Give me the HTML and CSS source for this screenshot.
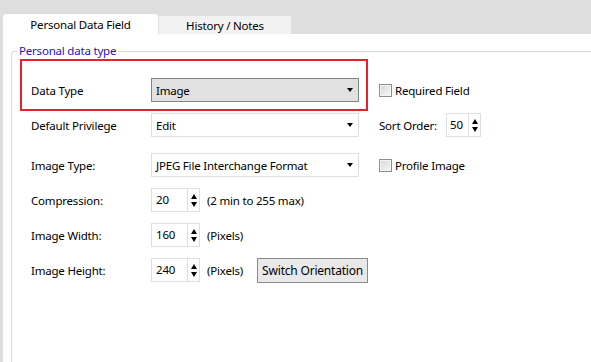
FILE: index.html
```html
<!DOCTYPE html>
<html lang="en">

<head>
    <meta charset="UTF-8">
    <title>Personal Data Field</title>
    <link rel="stylesheet" href="styles.css">
</head>

<body>
    <div class="window">
        <div class="tabs">
            <div class="tab active">Personal Data Field</div>
            <div class="tab">History / Notes</div>
        </div>

        <div class="panel">
            <fieldset class="group">
                <legend>Personal data type</legend>
                <div class="fields">

                    <!-- data type (highlighted) -->
                    <div class="line line-first">
                        <div class="highlight">
                            <span class="label">Data Type</span>
                            <div class="combo combo-dark"><span>Image</span><i class="caret"></i></div>
                        </div>
                        <div class="side">
                            <span class="check"></span><span class="check-text">Required Field</span>
                        </div>
                    </div>

                    <div class="line line-2">
                        <div class="cell">
                            <span class="label">Default Privilege</span>
                            <div class="combo"><span>Edit</span><i class="caret"></i></div>
                        </div>
                        <div class="side">
                            <span class="sort-label">Sort Order:</span>
                            <div class="spin spin-small">
                                <span class="spin-value">50</span>
                                <span class="spin-arrows"><i class="up"></i><i class="down"></i></span>
                            </div>
                        </div>
                    </div>

                    <div class="line line-3">
                        <div class="cell">
                            <span class="label">Image Type:</span>
                            <div class="combo"><span>JPEG File Interchange Format</span><i class="caret"></i></div>
                        </div>
                        <div class="side">
                            <span class="check"></span><span class="check-text">Profile Image</span>
                        </div>
                    </div>

                    <div class="line">
                        <div class="cell">
                            <span class="label">Compression:</span>
                            <div class="spin">
                                <span class="spin-value">20</span>
                                <span class="spin-arrows"><i class="up"></i><i class="down"></i></span>
                            </div>
                            <span class="note">(2 min to 255 max)</span>
                        </div>
                    </div>

                    <div class="line">
                        <div class="cell">
                            <span class="label">Image Width:</span>
                            <div class="spin">
                                <span class="spin-value">160</span>
                                <span class="spin-arrows"><i class="up"></i><i class="down"></i></span>
                            </div>
                            <span class="note">(Pixels)</span>
                        </div>
                    </div>

                    <div class="line">
                        <div class="cell">
                            <span class="label">Image Height:</span>
                            <div class="spin">
                                <span class="spin-value">240</span>
                                <span class="spin-arrows"><i class="up"></i><i class="down"></i></span>
                            </div>
                            <span class="note note-px">(Pixels)</span>
                            <button class="btn">Switch Orientation</button>
                        </div>
                    </div>

                </div>
            </fieldset>
        </div>
    </div>
</body>

</html>
```

FILE: styles.css
```css
body {
    margin: 0;
    font-family: "Noto Sans", "Segoe UI", sans-serif;
    font-size: 11.5px;
    letter-spacing: -0.2px;
    color: #000;
    background: #dedede;
    overflow: hidden;
    white-space: nowrap;
}

.window {
    padding-left: 3px;
    height: 362px;
}

/* tab strip */
.tabs {
    display: flex;
    align-items: flex-end;
    height: 34px;
}

.tab {
    width: 132px;
    height: 18px;
    line-height: 19px;
    margin-left: 1px;
    text-align: center;
    background: #f2f2f2;
}

.tab.active {
    width: 155px;
    height: 20px;
    line-height: 22px;
    margin-left: 0;
    background: #fff;
    border-radius: 3px 3px 0 0;
}

.panel {
    background: #fff;
    height: 328px;
    padding-top: 9px;
    box-sizing: border-box;
}

.group {
    margin: 0 -10px 0 8px;
    padding: 0;
    border: 1px solid #d6dae0;
    border-radius: 3px;
    height: 330px;
}

.group legend {
    margin-left: 5px;
    padding: 0 2px;
    line-height: 16px;
    color: #2a10b8;
}

.fields {
    padding-left: 8px;
}

/* rows */
.line {
    display: flex;
    align-items: center;
    margin-top: 11px;
}

.line-first {
    align-items: flex-end;
    margin-top: 0;
}

.line-first .side {
    margin-bottom: 9px;
}

.line-2 {
    margin-top: 2px;
}

.line-3 {
    margin-top: 16px;
}

.highlight {
    display: flex;
    align-items: center;
    width: 328px;
    height: 24px;
    padding: 17px 7px 7px 9px;
    border: 2px solid #e8202a;
}

.cell {
    display: flex;
    align-items: center;
    width: 348px;
    height: 24px;
    padding-left: 11px;
    box-sizing: border-box;
}

.side {
    display: flex;
    align-items: center;
    height: 24px;
    margin-left: 11px;
}

.label {
    width: 120px;
    flex: none;
}

/* combo boxes */
.combo {
    display: flex;
    align-items: center;
    justify-content: space-between;
    width: 208px;
    height: 24px;
    padding: 0 4px;
    box-sizing: border-box;
    border: 1px solid #dcdfe4;
    background: #fff;
    flex: none;
}

.combo-dark {
    background: #e1e1e1;
    border-color: #858585;
}

.caret {
    width: 0;
    height: 0;
    margin-right: 1px;
    border-left: 3.5px solid transparent;
    border-right: 3.5px solid transparent;
    border-top: 4px solid #000;
}

/* check boxes */
.check {
    width: 11px;
    height: 11px;
    border: 1px solid #8e8e8e;
    background: linear-gradient(135deg, #d8d8d8, #f6f6f6);
    box-shadow: inset 0 0 0 1px #f4f4f4;
}

.check-text {
    margin-left: 3px;
}

.sort-label {
    width: 67px;
}

/* spin boxes */
.spin {
    display: flex;
    height: 24px;
    flex: none;
}

.spin-value {
    width: 37px;
    padding-left: 4px;
    line-height: 22px;
    box-sizing: border-box;
    border: 1px solid #dcdfe4;
}

.spin-small .spin-value {
    width: 23px;
    padding-left: 3px;
}

.spin-arrows {
    display: flex;
    flex-direction: column;
    align-items: center;
    justify-content: center;
    gap: 3px;
    width: 12px;
    box-sizing: border-box;
    border: 1px solid #dcdfe4;
    border-left: none;
}

.spin-arrows .up {
    border-left: 3px solid transparent;
    border-right: 3px solid transparent;
    border-bottom: 5px solid #000;
}

.spin-arrows .down {
    border-left: 3px solid transparent;
    border-right: 3px solid transparent;
    border-top: 5px solid #000;
}

.note {
    margin-left: 7px;
}

.note-px {
    width: 45px;
}

.btn {
    margin-left: 9px;
    width: 121px;
    height: 25px;
    padding: 0;
    font-family: inherit;
    font-size: 12px;
    letter-spacing: -0.2px;
    color: #000;
    background: #e9e9e9;
    border: 1px solid #8a8a8a;
    border-radius: 0;
}
```
